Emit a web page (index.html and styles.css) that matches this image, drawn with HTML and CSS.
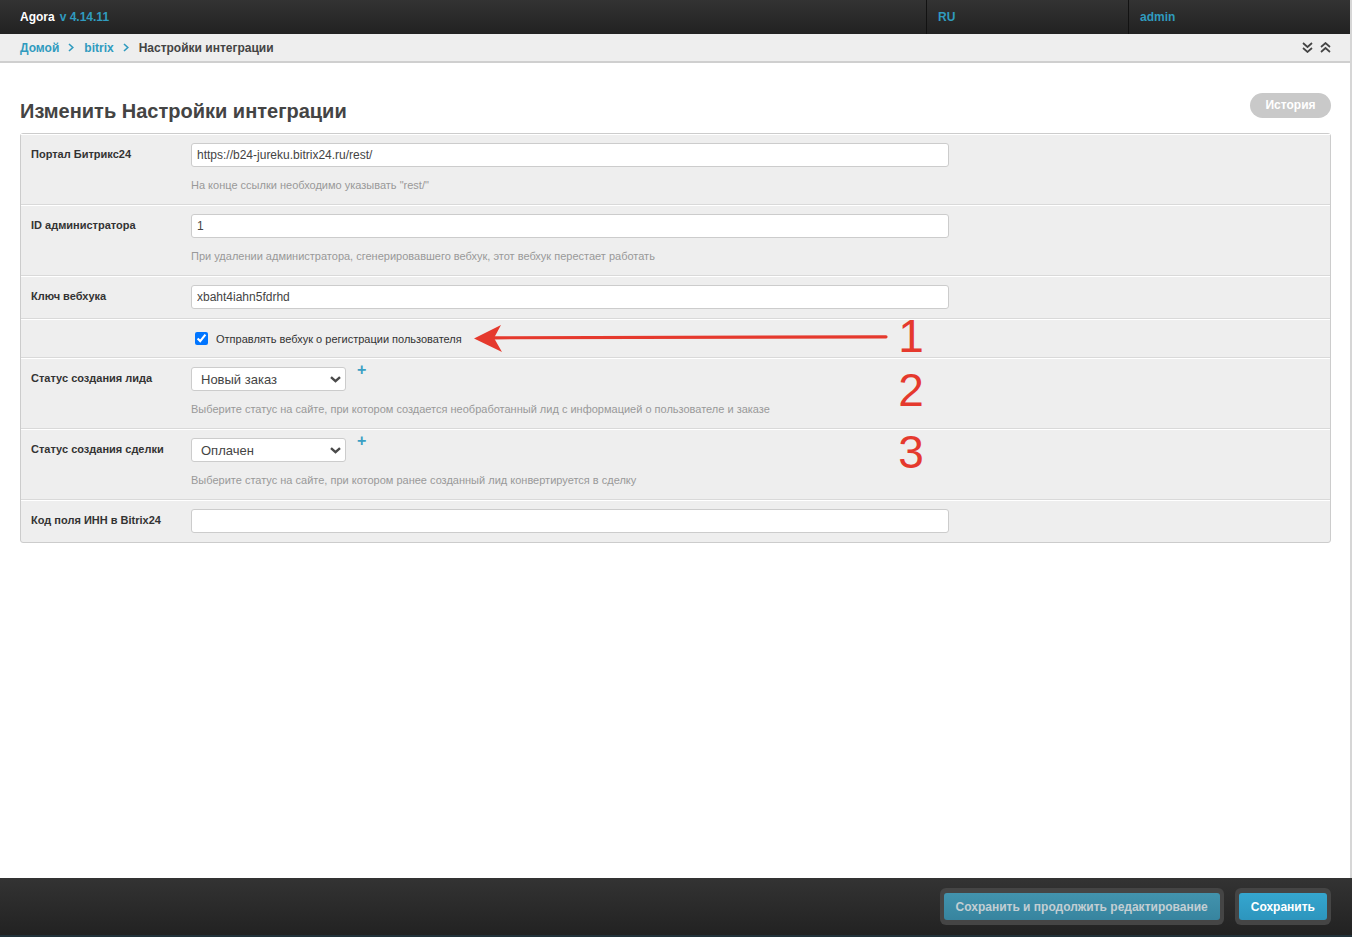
FILE: index.html
```html
<!DOCTYPE html>
<html lang="ru">

<head>
  <meta charset="UTF-8">
  <meta name="viewport" content="width=device-width, initial-scale=1.0">
  <title>Изменить Настройки интеграции | Agora</title>
  <link rel="stylesheet" href="styles.css">
</head>

<body>
  <div class="page">
    <header class="topbar">
      <div class="brand">
        <span class="brand-name">Agora</span>
        <span class="brand-version">v 4.14.11</span>
      </div>
      <div class="topbar-cell lang"><a href="#">RU</a></div>
      <div class="topbar-cell user"><a href="#">admin</a></div>
    </header>

    <nav class="breadcrumbs">
      <div class="crumbs">
        <a href="#">Домой</a>
        <svg class="crumb-sep" width="6" height="9" viewBox="0 0 6 9"><path d="M1 1 L4.8 4.5 L1 8" fill="none" stroke="#309bbf" stroke-width="1.6"/></svg>
        <a href="#">bitrix</a>
        <svg class="crumb-sep" width="6" height="9" viewBox="0 0 6 9"><path d="M1 1 L4.8 4.5 L1 8" fill="none" stroke="#309bbf" stroke-width="1.6"/></svg>
        <span class="current">Настройки интеграции</span>
      </div>
      <div class="collapse-tools">
        <svg width="11" height="11" viewBox="0 0 11 11"><path d="M1 1 L5.5 5 L10 1 M1 6 L5.5 10 L10 6" fill="none" stroke="#444" stroke-width="1.7"/></svg>
        <svg width="11" height="11" viewBox="0 0 11 11"><path d="M1 5 L5.5 1 L10 5 M1 10 L5.5 6 L10 10" fill="none" stroke="#444" stroke-width="1.7"/></svg>
      </div>
    </nav>

    <main class="content">
      <div class="title-row">
        <h1>Изменить Настройки интеграции</h1>
        <a href="#" class="history-btn">История</a>
      </div>

      <form class="module">
        <div class="form-row">
          <label class="row-label">Портал Битрикс24</label>
          <div class="row-field">
            <input type="text" class="text-input" value="https://b24-jureku.bitrix24.ru/rest/">
            <p class="help">На конце ссылки необходимо указывать "rest/"</p>
          </div>
        </div>

        <div class="form-row">
          <label class="row-label">ID администратора</label>
          <div class="row-field">
            <input type="text" class="text-input" value="1">
            <p class="help">При удалении администратора, сгенерировавшего вебхук, этот вебхук перестает работать</p>
          </div>
        </div>

        <div class="form-row">
          <label class="row-label">Ключ вебхука</label>
          <div class="row-field">
            <input type="text" class="text-input" value="xbaht4iahn5fdrhd">
          </div>
        </div>

        <div class="form-row">
          <div class="row-label"></div>
          <div class="row-field checkbox-field">
            <input type="checkbox" id="sendHook" checked>
            <label for="sendHook">Отправлять вебхук о регистрации пользователя</label>
          </div>
        </div>

        <div class="form-row">
          <label class="row-label">Статус создания лида</label>
          <div class="row-field">
            <div class="select-line">
              <div class="select-wrap">
                <select>
                  <option>Новый заказ</option>
                </select>
                <svg class="select-arrow" width="11" height="7" viewBox="0 0 11 7"><path d="M1 1.2 L5.5 5.2 L10 1.2" fill="none" stroke="#4a4a4a" stroke-width="2.4"/></svg>
              </div>
              <a href="#" class="add-link">+</a>
            </div>
            <p class="help">Выберите статус на сайте, при котором создается необработанный лид с информацией о пользователе и заказе</p>
          </div>
        </div>

        <div class="form-row">
          <label class="row-label">Статус создания сделки</label>
          <div class="row-field">
            <div class="select-line">
              <div class="select-wrap">
                <select>
                  <option>Оплачен</option>
                </select>
                <svg class="select-arrow" width="11" height="7" viewBox="0 0 11 7"><path d="M1 1.2 L5.5 5.2 L10 1.2" fill="none" stroke="#4a4a4a" stroke-width="2.4"/></svg>
              </div>
              <a href="#" class="add-link">+</a>
            </div>
            <p class="help">Выберите статус на сайте, при котором ранее созданный лид конвертируется в сделку</p>
          </div>
        </div>

        <div class="form-row">
          <label class="row-label">Код поля ИНН в Bitrix24</label>
          <div class="row-field">
            <input type="text" class="text-input" value="">
          </div>
        </div>
      </form>
    </main>

    <footer class="submit-row">
      <div class="btn-frame">
        <button class="btn btn-secondary">Сохранить и продолжить редактирование</button>
      </div>
      <div class="btn-frame">
        <button class="btn btn-primary">Сохранить</button>
      </div>
    </footer>

    <!-- пометки поверх скриншота -->
    <svg class="annotations" width="1352" height="937" viewBox="0 0 1352 937">
      <path d="M494 337.8 L886 336.8" stroke="#e5392d" stroke-width="3.2" stroke-linecap="round"/>
      <path d="M474 338.5 L501 325 L494 338 L502 352 Z" fill="#e5392d"/>
      <text x="911" y="352" class="annot-num">1</text>
      <text x="911" y="406" class="annot-num">2</text>
      <text x="911" y="468" class="annot-num">3</text>
    </svg>
  </div>
</body>

</html>
```

FILE: styles.css
```css
html,
body {
  margin: 0;
  padding: 0;
  height: 100%;
}

body {
  font-family: 'Liberation Sans', Arial, sans-serif;
  font-size: 12px;
  color: #333;
  background: #fff;
}

a {
  text-decoration: none;
}

.page {
  position: relative;
  display: flex;
  flex-direction: column;
  min-height: 100vh;
  box-sizing: border-box;
  border-right: 2px solid #d6d6d6;
}

/* top bar */
.topbar {
  display: flex;
  height: 34px;
  background: linear-gradient(#333, #222);
  font-weight: bold;
  font-size: 12px;
}

.brand {
  flex: 1;
  display: flex;
  align-items: center;
  padding-left: 20px;
}

.brand-name {
  color: #fff;
}

.brand-version {
  color: #309bbf;
  margin-left: 5px;
}

.topbar-cell {
  display: flex;
  align-items: center;
  padding-left: 11px;
  border-left: 1px solid #121212;
  box-sizing: border-box;
}

.topbar-cell a {
  color: #309bbf;
}

.topbar-cell.lang {
  width: 202px;
}

.topbar-cell.user {
  width: 222px;
}

/* breadcrumbs */
.breadcrumbs {
  display: flex;
  align-items: center;
  justify-content: space-between;
  height: 27px;
  padding: 0 20px;
  background: #eee;
  border-bottom: 2px solid #cfcfcf;
  font-weight: bold;
}

.crumbs {
  display: flex;
  align-items: center;
}

.crumbs a {
  color: #309bbf;
}

.crumb-sep {
  margin: 0 10px 0 9px;
}

.crumbs .current {
  color: #444;
}

.collapse-tools {
  display: flex;
  gap: 7px;
  margin-right: -1px;
}

/* content */
.content {
  flex: 1;
  padding: 0 19px 0 20px;
}

.title-row {
  display: flex;
  justify-content: space-between;
  align-items: flex-start;
  padding-top: 31px;
  margin-bottom: 10px;
}

h1 {
  margin: 5px 0 0;
  font-size: 20px;
  line-height: 24px;
  font-weight: bold;
  color: #444;
}

.history-btn {
  display: block;
  width: 81px;
  height: 25px;
  margin-top: -1px;
  line-height: 25px;
  text-align: center;
  border-radius: 13px;
  background: #c9c9c9;
  color: #fff;
  font-weight: bold;
  font-size: 12px;
}

.module {
  margin: 0;
  background: #eee;
  border: 1px solid #ccc;
  border-radius: 3px;
}

.form-row {
  display: flex;
  padding: 8px 10px 9px;
  border-top: 1px solid #fff;
  border-bottom: 1px solid #d9d9d9;
}

.form-row:last-child {
  border-bottom: none;
}

.row-label {
  width: 160px;
  flex-shrink: 0;
  padding-top: 5px;
  font-size: 11px;
  font-weight: bold;
  color: #333;
  line-height: 13px;
}

.row-field {
  flex: 1;
}

.text-input {
  display: block;
  width: 758px;
  height: 24px;
  box-sizing: border-box;
  padding: 0 5px;
  border: 1px solid #ccc;
  border-radius: 3px;
  background: #fff;
  font-family: 'Liberation Sans', Arial, sans-serif;
  font-size: 12px;
  color: #444;
}

.help {
  margin: 11px 0 2px;
  font-size: 11px;
  line-height: 15px;
  color: #999;
}

.checkbox-field {
  display: flex;
  align-items: center;
  height: 19px;
  margin-top: 1px;
}

.checkbox-field input {
  width: 13px;
  height: 13px;
  margin: 0 0 0 4px;
  accent-color: #0075ff;
}

.checkbox-field label {
  margin-left: 8px;
  font-size: 11px;
  color: #333;
}

.select-line {
  display: flex;
  align-items: flex-start;
}

.select-wrap {
  position: relative;
  width: 155px;
}

.select-wrap select {
  appearance: none;
  -webkit-appearance: none;
  display: block;
  width: 100%;
  height: 24px;
  padding: 0 24px 0 9px;
  border: 1px solid #ccc;
  border-radius: 3px;
  background: #fff;
  font-family: 'Liberation Sans', Arial, sans-serif;
  font-size: 13px;
  color: #444;
}

.select-arrow {
  position: absolute;
  right: 5px;
  top: 9px;
  pointer-events: none;
}

.add-link {
  margin: -6px 0 0 11px;
  font-size: 16px;
  font-weight: bold;
  color: #3a9fc4;
  line-height: 18px;
}

/* footer */
.submit-row {
  display: flex;
  justify-content: flex-end;
  align-items: flex-start;
  gap: 11px;
  height: 59px;
  box-sizing: border-box;
  padding: 10px 21px 0 0;
  margin-right: -2px;
  background: linear-gradient(#333, #222);
  border-bottom: 2px solid #22323a;
}

.btn-frame {
  padding: 5px 4px;
  border-radius: 6px;
  background: #454545;
}

.btn {
  display: block;
  height: 27px;
  padding: 0 12px;
  border: none;
  border-radius: 3px;
  font-family: 'Liberation Sans', Arial, sans-serif;
  font-size: 12px;
  font-weight: bold;
  cursor: pointer;
}

.btn-secondary {
  background: linear-gradient(#4293ad, #37849f);
  color: #c2ced3;
}

.btn-primary {
  background: linear-gradient(#35a6cf, #2d95bd);
  color: #fff;
}

/* annotations */
.annotations {
  position: absolute;
  top: 0;
  left: 0;
  pointer-events: none;
}

.annot-num {
  font-family: 'Liberation Sans', Arial, sans-serif;
  font-size: 46px;
  fill: #e5392d;
  text-anchor: middle;
}
```
